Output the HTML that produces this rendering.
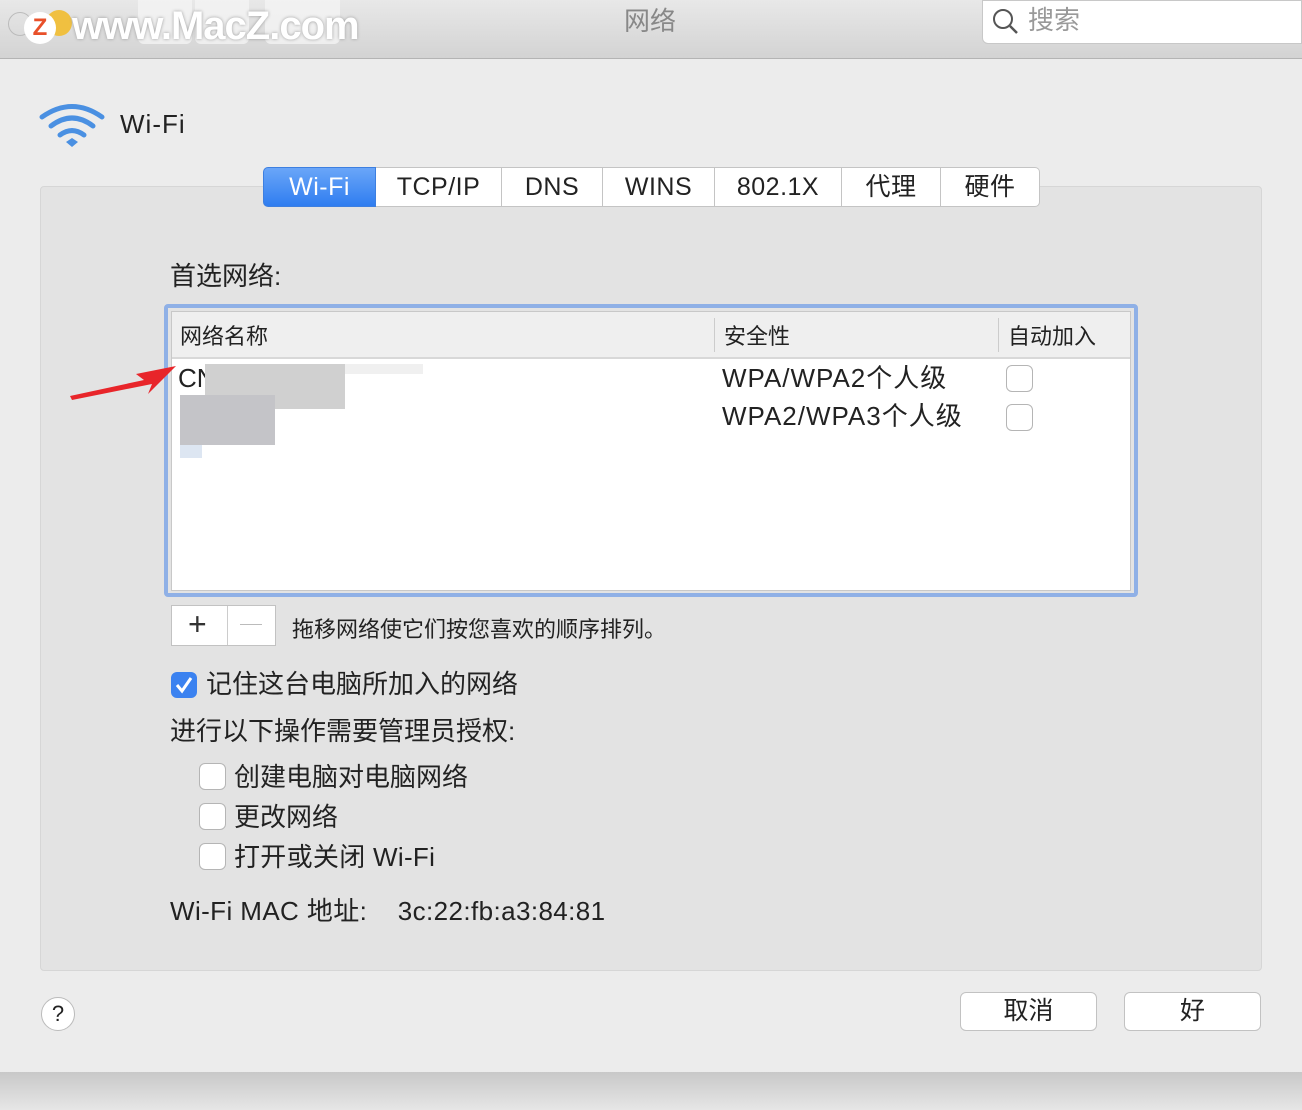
<!DOCTYPE html><html><head><meta charset="utf-8"><style>
*{margin:0;padding:0;box-sizing:border-box}
body{width:1302px;height:1110px;background:#ececec;font-family:"Liberation Sans","Noto Sans CJK SC",sans-serif;color:#222;position:relative;overflow:hidden}
.a{position:absolute}
.title{left:0;top:0;width:1302px;height:59px;background:linear-gradient(#e8e8e8,#d3d3d3);border-bottom:1px solid #b4b4b4}
.tab{top:167px;height:40px;border:1px solid #c4c4c4;border-left:none;background:#fff;font-size:25px;text-align:center;line-height:38px;letter-spacing:.5px}
.cb{width:27px;height:27px;border:1px solid #b5b5b5;border-radius:6px;background:#fff}
.btn{background:#fff;border:1px solid #c2c2c2;border-radius:6px;font-size:25px;text-align:center;line-height:36px}
.t{font-size:26px;white-space:nowrap;line-height:30px}
</style></head><body>
<div class="a title"></div>
<div class="a" style="left:8px;top:12px;width:24px;height:24px;border-radius:50%;border:1px solid #bbb"></div>
<div class="a" style="left:46px;top:10px;width:26px;height:26px;border-radius:50%;background:#f0c040"></div>
<div class="a" style="left:24px;top:12px;width:32px;height:32px;border-radius:50%;background:#fff;color:#e8502a;font-weight:bold;font-size:24px;text-align:center;line-height:32px">Z</div>
<div class="a" style="left:138px;top:0;width:54px;height:44px;background:#f4f4f4;border-radius:0 0 6px 6px;opacity:.8"></div>
<div class="a" style="left:195px;top:0;width:54px;height:44px;background:#f4f4f4;border-radius:0 0 6px 6px;opacity:.8"></div>
<div class="a" style="left:265px;top:0;width:75px;height:44px;background:#f4f4f4;border-radius:0 0 6px 6px;opacity:.8"></div>
<div class="a" style="left:72px;top:4px;font-size:40px;font-weight:bold;color:#fff;text-shadow:0 0 3px #999;letter-spacing:-1px">www.MacZ.com</div>
<div class="a t" style="left:624px;top:6px;color:#888">网络</div>
<div class="a" style="left:982px;top:0;width:320px;height:44px;background:#fff;border:1px solid #c8c8c8;border-radius:0 0 0 6px"></div>
<svg class="a" style="left:990px;top:6px" width="30" height="30"><circle cx="13" cy="13" r="9" fill="none" stroke="#555" stroke-width="2"/><line x1="20" y1="20" x2="27" y2="27" stroke="#555" stroke-width="2.5"/></svg>
<div class="a t" style="left:1028px;top:5px;color:#999">搜索</div>
<svg class="a" style="left:38px;top:100px" width="68" height="50"><g fill="none" stroke="#4a90e2" stroke-width="5" stroke-linecap="round"><path d="M4 17 Q34 -4 64 17"/><path d="M13 26 Q34 10 55 26"/><path d="M22 35 Q34 26 46 35"/></g><path d="M28 42 L34 38 L40 42 L34 47Z" fill="#4a90e2"/></svg>
<div class="a t" style="left:120px;top:109px;letter-spacing:1px">Wi-Fi</div>
<div class="a" style="left:40px;top:186px;width:1222px;height:785px;background:#e3e3e3;border:1px solid #d6d6d6;border-radius:4px"></div>
<div class="a tab" style="left:263px;width:113px;background:linear-gradient(#6aa6f8,#2f7df0);color:#fff;border:1px solid #3d7fe0;border-radius:5px 0 0 5px">Wi-Fi</div>
<div class="a tab" style="left:376px;width:126px">TCP/IP</div>
<div class="a tab" style="left:502px;width:101px">DNS</div>
<div class="a tab" style="left:603px;width:112px">WINS</div>
<div class="a tab" style="left:715px;width:127px">802.1X</div>
<div class="a tab" style="left:842px;width:99px">代理</div>
<div class="a tab" style="left:941px;width:99px;border-radius:0 5px 5px 0">硬件</div>
<div class="a t" style="left:170px;top:261px">首选网络:</div>
<div class="a" style="left:164px;top:304px;width:974px;height:293px;border:4px solid #8fb0e6;border-radius:4px"></div>
<div class="a" style="left:171px;top:311px;width:960px;height:280px;background:#fff;border:1px solid #c8c8c8"></div>
<div class="a" style="left:172px;top:312px;width:958px;height:47px;background:#efefef;border-bottom:2px solid #d8d8d8"></div>
<div class="a" style="left:714px;top:318px;width:1px;height:34px;background:#ccc"></div>
<div class="a" style="left:998px;top:318px;width:1px;height:34px;background:#ccc"></div>
<div class="a" style="left:180px;top:319px;font-size:22px">网络名称</div>
<div class="a" style="left:724px;top:319px;font-size:22px">安全性</div>
<div class="a" style="left:1008px;top:319px;font-size:22px">自动加入</div>
<div class="a t" style="left:178px;top:363px">CN</div>
<div class="a" style="left:205px;top:364px;width:140px;height:45px;background:#d0d0d0"></div>
<div class="a" style="left:180px;top:395px;width:95px;height:50px;background:#c4c4c8"></div>
<div class="a" style="left:345px;top:364px;width:78px;height:10px;background:#f0f0f0"></div>
<div class="a" style="left:180px;top:445px;width:22px;height:13px;background:#dde6f2"></div>
<div class="a t" style="left:722px;top:363px;letter-spacing:1px">WPA/WPA2个人级</div>
<div class="a t" style="left:722px;top:401px;letter-spacing:1px">WPA2/WPA3个人级</div>
<div class="a cb" style="left:1006px;top:365px"></div>
<div class="a cb" style="left:1006px;top:404px"></div>
<svg class="a" style="left:68px;top:360px" width="110" height="42"><path d="M4 40 L84 24 L80 34 L108 6 L68 14 L76 20 L2 36Z" fill="#e8252a"/></svg>
<div class="a" style="left:171px;top:605px;width:105px;height:41px;background:#fff;border:1px solid #c2c2c2"></div>
<div class="a" style="left:227px;top:606px;width:1px;height:39px;background:#ccc"></div>
<div class="a" style="left:188px;top:604px;font-size:32px;line-height:40px;color:#333">+</div>
<div class="a" style="left:240px;top:624px;width:22px;height:1px;background:#bbb"></div>
<div class="a" style="left:292px;top:612px;font-size:22px">拖移网络使它们按您喜欢的顺序排列。</div>
<div class="a" style="left:171px;top:672px;width:26px;height:26px;border-radius:6px;background:#3b82f0"><svg width="26" height="26"><path d="M6 13 L11 19 L20 6" fill="none" stroke="#fff" stroke-width="3"/></svg></div>
<div class="a t" style="left:206px;top:669px">记住这台电脑所加入的网络</div>
<div class="a t" style="left:170px;top:716px">进行以下操作需要管理员授权:</div>
<div class="a cb" style="left:199px;top:763px"></div>
<div class="a t" style="left:234px;top:762px">创建电脑对电脑网络</div>
<div class="a cb" style="left:199px;top:803px"></div>
<div class="a t" style="left:234px;top:802px">更改网络</div>
<div class="a cb" style="left:199px;top:843px"></div>
<div class="a t" style="left:234px;top:842px;letter-spacing:.3px">打开或关闭 Wi-Fi</div>
<div class="a t" style="left:170px;top:896px;letter-spacing:.4px">Wi-Fi MAC 地址:&nbsp;&nbsp;&nbsp;&nbsp;3c:22:fb:a3:84:81</div>
<div class="a" style="left:41px;top:997px;width:34px;height:34px;border-radius:50%;background:#fff;border:1px solid #bbb;font-size:22px;text-align:center;line-height:32px">?</div>
<div class="a btn" style="left:960px;top:992px;width:137px;height:39px">取消</div>
<div class="a btn" style="left:1124px;top:992px;width:137px;height:39px">好</div>
<div class="a" style="left:0;top:1072px;width:1302px;height:38px;background:linear-gradient(#c8c8c8,#e6e6e6)"></div>
</body></html>
